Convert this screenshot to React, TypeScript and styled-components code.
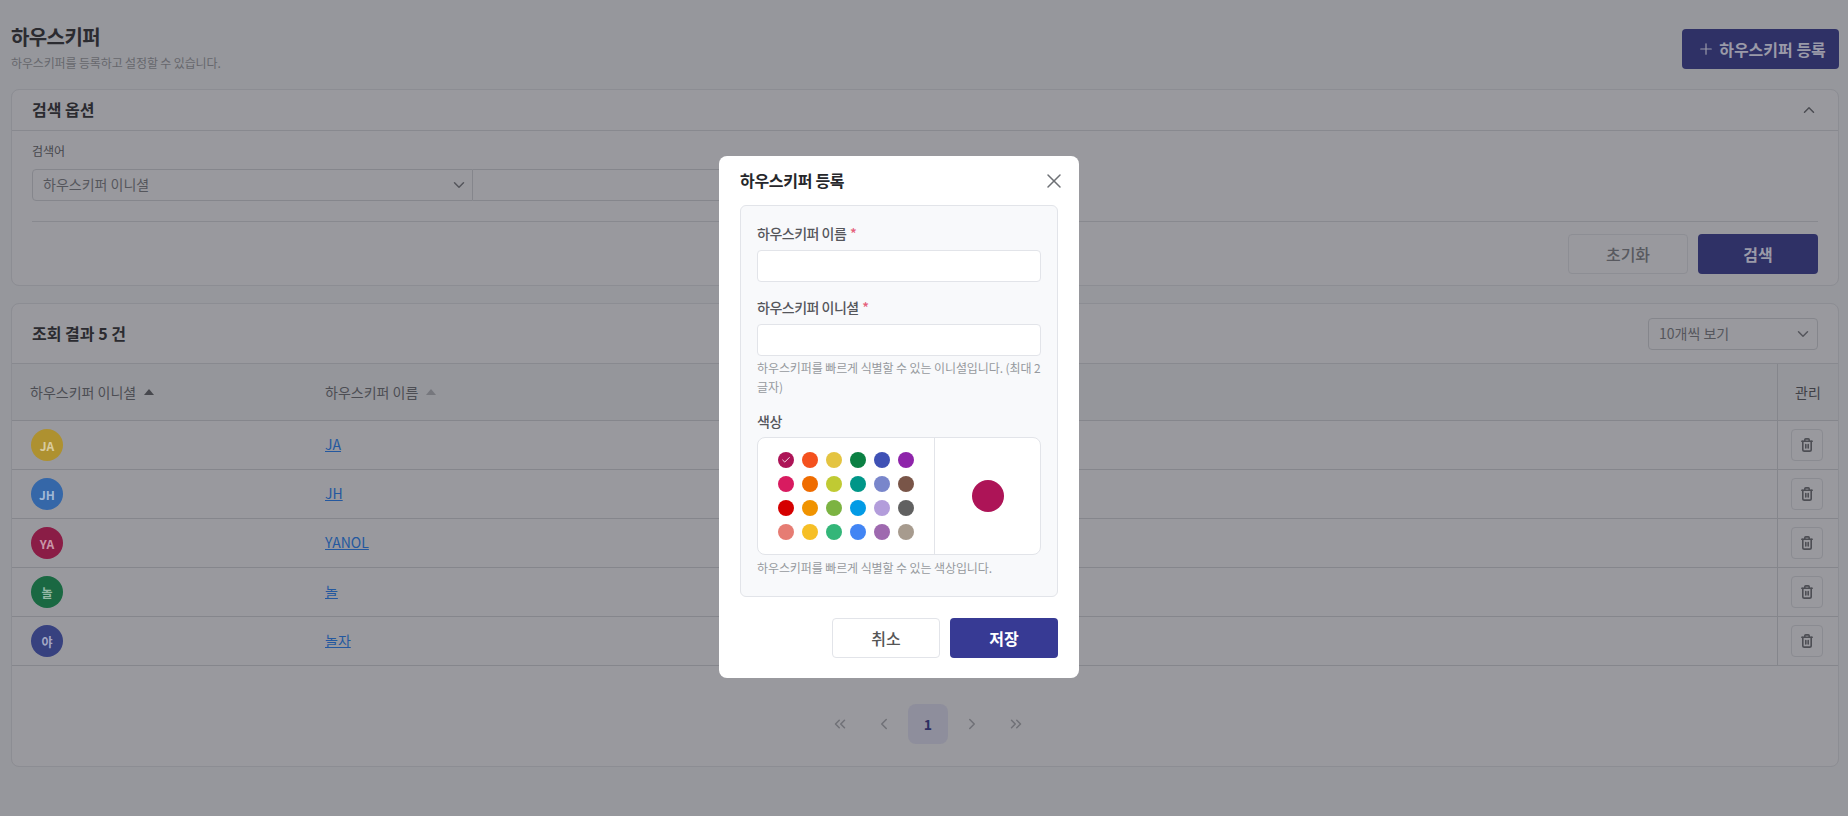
import React from 'react'
import styled, { createGlobalStyle } from 'styled-components';
import { ChevronDown, ChevronUp, ChevronLeft, ChevronRight, ChevronsLeft, ChevronsRight, Plus, X, Check } from 'lucide-react';

const GlobalStyle = createGlobalStyle`
  html, body { margin: 0; padding: 0; height: 100%; }
  body {
    background: #96979c;
    font-family: "Noto Sans CJK KR", "Noto Sans", sans-serif;
    color: #2a2a2e;
    overflow: hidden;
  }
  * { box-sizing: border-box; }
`;

const Page = styled.div`
  width: 1848px;
  height: 816px;
  padding: 0 9px 0 11px;
`;

const PageHeader = styled.header`
  height: 89px;
  display: flex;
  justify-content: space-between;
  align-items: flex-start;
  padding-top: 23px;
`;

const Title = styled.h1`
  margin: 0;
  font-size: 20px;
  line-height: 28px;
  font-weight: 700;
  letter-spacing: -0.6px;
  color: #2b2b30;
`;

const Subtitle = styled.p`
  margin: 3px 0 0;
  font-size: 12px;
  line-height: 18px;
  letter-spacing: -0.14px;
  color: #66676d;
`;

const PrimaryButton = styled.button<{ $width?: number; $dim?: boolean }>`
  width: ${(p) => (p.$width ? p.$width + 'px' : 'auto')};
  height: 40px;
  display: inline-flex;
  align-items: center;
  justify-content: center;
  gap: 4px;
  border: 0;
  border-radius: 4px;
  font-family: inherit;
  font-size: 16px;
  font-weight: 700;
  background: ${(p) => (p.$dim ? '#2f3166' : '#373a94')};
  color: ${(p) => (p.$dim ? '#9a9aa8' : '#fff')};
`;

const RegisterButton = styled(PrimaryButton)`
  margin: 6px 0 0;
  padding: 0 0 0 2px;
`;

const OutlineButton = styled.button<{ $dim?: boolean }>`
  width: ${(p) => (p.$dim ? 120 : 108)}px;
  height: 40px;
  border-radius: 4px;
  font-family: inherit;
  font-size: 16px;
  font-weight: 500;
  border: 1px solid ${(p) => (p.$dim ? '#8d8e94' : '#e2e4e9')};
  background: ${(p) => (p.$dim ? 'transparent' : '#fff')};
  color: ${(p) => (p.$dim ? '#58595f' : '#555')};
`;

const Card = styled.section<{ $height: number }>`
  height: ${(p) => p.$height}px;
  border: 1px solid #8c8d93;
  border-radius: 8px;
  background: #99999e;
  overflow: hidden;
`;

const SearchCard = styled(Card)`
  margin-bottom: 17px;
`;

const CardHeader = styled.div<{ $height: number }>`
  height: ${(p) => p.$height}px;
  display: flex;
  align-items: center;
  justify-content: space-between;
  padding: 0 20px;
  border-bottom: 1px solid #88898f;
`;

const CardTitle = styled.h2`
  margin: 0 0 2px;
  font-size: 16px;
  font-weight: 700;
  color: #2b2b30;
`;

const SearchBody = styled.div`
  padding: 11px 20px 0;
`;

const FieldLabel = styled.div`
  font-size: 12px;
  line-height: 18px;
  color: #46474c;
  margin-bottom: 9px;
`;

const SearchRow = styled.div`
  display: flex;
  padding-bottom: 20px;
  border-bottom: 1px solid #88898f;
`;

const SelectBox = styled.div<{ $width: number; $joined?: boolean }>`
  width: ${(p) => p.$width}px;
  height: 32px;
  display: flex;
  align-items: center;
  justify-content: space-between;
  padding: 0 ${(p) => (p.$joined ? 4 : 5)}px 2px 10px;
  border: 1px solid #85868c;
  border-radius: ${(p) => (p.$joined ? '4px 0 0 4px' : '4px')};
  font-size: 14px;
  color: #55565c;

  svg { margin-top: 2px; }
`;

const SearchInput = styled.div`
  width: 500px;
  height: 32px;
  border: 1px solid #85868c;
  border-left: 0;
`;

const ButtonRow = styled.div`
  display: flex;
  justify-content: flex-end;
  gap: 10px;
  padding-top: 12px;
`;

const TableHead = styled.div`
  height: 57px;
  display: grid;
  grid-template-columns: 295px 1fr 61px;
  align-items: stretch;
  background: #95969b;
  border-bottom: 1px solid #85868c;
`;

const Row = styled.div`
  height: 49px;
  display: grid;
  grid-template-columns: 295px 1fr 61px;
  align-items: stretch;
  border-bottom: 1px solid #85868c;
`;

const HeadCell = styled.div<{ $center?: boolean }>`
  display: flex;
  align-items: center;
  gap: 8px;
  padding-left: ${(p) => (p.$center ? 0 : 18)}px;
  justify-content: ${(p) => (p.$center ? 'center' : 'flex-start')};
  font-size: 14px;
  color: #4c4d53;
`;

const ManageHead = styled(HeadCell)`
  border-left: 1px solid #85868c;
  color: #3f4046;
`;

const SortArrow = styled.span<{ $active?: boolean }>`
  width: 0;
  height: 0;
  border-left: 5px solid transparent;
  border-right: 5px solid transparent;
  border-bottom: 6px solid ${(p) => (p.$active ? '#47484e' : '#76777d')};
`;

const Cell = styled.div`
  display: flex;
  align-items: center;
  padding-left: 19px;
`;

const NameCell = styled(Cell)`
  padding-left: 18px;
`;

const ManageCell = styled(Cell)`
  border-left: 1px solid #85868c;
  padding-left: 13px;
`;

const Avatar = styled.div<{ $color: string }>`
  width: 32px;
  height: 32px;
  border-radius: 50%;
  display: flex;
  align-items: center;
  justify-content: center;
  background: ${(p) => p.$color};
  color: rgba(255, 255, 255, 0.55);
  font-size: 12px;
  font-weight: 700;
`;

const NameLink = styled.a`
  margin-bottom: 2px;
  font-size: 14px;
  color: #24589f;
  text-decoration: underline;
`;

const IconButton = styled.button`
  width: 32px;
  height: 32px;
  padding: 0;
  display: flex;
  align-items: center;
  justify-content: center;
  border: 1px solid #8a8b91;
  border-radius: 4px;
  background: transparent;
  color: #4d4e54;
`;

const Pagination = styled.nav`
  display: flex;
  justify-content: center;
  gap: 4px;
  margin-top: 38px;
  padding-left: 6px;
`;

const PageButton = styled.div<{ $active?: boolean }>`
  width: 40px;
  height: 40px;
  display: flex;
  align-items: center;
  justify-content: center;
  border-radius: 8px;
  font-size: 14px;
  font-weight: 700;
  color: ${(p) => (p.$active ? '#2d2f62' : '#707177')};
  background: ${(p) => (p.$active ? '#8e8e9c' : 'transparent')};
`;

const ModalLayer = styled.div`
  position: fixed;
  inset: 0;
  padding: 156px 0 0 719px;
`;

const Modal = styled.div`
  width: 360px;
  height: 522px;
  padding: 0 21px;
  background: #fff;
  border-radius: 8px;
`;

const ModalHeader = styled.div`
  height: 49px;
  display: flex;
  align-items: center;
  justify-content: space-between;
  color: #6d7075;
`;

const ModalTitle = styled.h3`
  margin: 0 0 2px;
  font-size: 16px;
  font-weight: 700;
  letter-spacing: -0.3px;
  color: #26272b;
`;

const CloseIcon = styled(X)`
  margin: 1px -8px 0 0;
`;

const FormPanel = styled.div`
  height: 392px;
  padding: 17px 16px 0;
  background: #f8f9fb;
  border: 1px solid #e2e4e9;
  border-radius: 6px;
`;

const FormLabel = styled.label`
  display: block;
  font-size: 14px;
  font-weight: 500;
  line-height: 20px;
  letter-spacing: -0.5px;
  color: #55565b;
  margin-bottom: 7px;
`;

const ColorLabel = styled(FormLabel)`
  margin-bottom: 6px;
`;

const Required = styled.span`
  margin-left: 1px;
  color: #e5607a;
`;

const TextInput = styled.input`
  display: block;
  width: 100%;
  height: 32px;
  border: 1px solid #e2e4e9;
  border-radius: 4px;
  background: #fff;
`;

const FieldGroup = styled.div`
  margin-bottom: 15px;
`;

const HelpText = styled.p`
  margin: 2px 0 0;
  font-size: 12px;
  line-height: 19px;
  letter-spacing: -0.1px;
  color: #96999e;
`;

const PickerHelp = styled(HelpText)`
  margin-top: 3px;
`;

const PickerBox = styled.div`
  height: 118px;
  display: grid;
  grid-template-columns: 177px 1fr;
  background: #fff;
  border: 1px solid #e2e4e9;
  border-radius: 8px;
`;

const SwatchGrid = styled.div`
  display: grid;
  grid-template-columns: repeat(6, 16px);
  grid-auto-rows: 16px;
  gap: 8px;
  padding: 14px 0 0 20px;
  border-right: 1px solid #e2e4e9;
`;

const Swatch = styled.div<{ $color: string }>`
  width: 16px;
  height: 16px;
  border-radius: 50%;
  display: flex;
  align-items: center;
  justify-content: center;
  background: ${(p) => p.$color};
  color: #fff;
`;

const PreviewWrap = styled.div`
  display: flex;
  align-items: center;
  justify-content: center;
`;

const PreviewDot = styled.div`
  width: 32px;
  height: 32px;
  border-radius: 50%;
  background: #ad1457;
`;

const ModalFooter = styled.div`
  display: flex;
  justify-content: flex-end;
  gap: 10px;
  padding-top: 21px;
`;

const swatches = [
  '#ad1457', '#f4511e', '#e4c441', '#0b8043', '#3f51b5', '#8e24aa',
  '#d81b60', '#ef6c00', '#c0ca33', '#009688', '#7986cb', '#795548',
  '#d50000', '#f09300', '#7cb342', '#039be5', '#b39ddb', '#616161',
  '#e67c73', '#f6bf26', '#33b679', '#4285f4', '#9e69af', '#a79b8e',
];

const rows = [
  { initial: 'JA', name: 'JA', color: '#ae9130' },
  { initial: 'JH', name: 'JH', color: '#3567a8' },
  { initial: 'YA', name: 'YANOL', color: '#8a1d46' },
  { initial: '놀', name: '놀', color: '#1a6842' },
  { initial: '야', name: '놀자', color: '#37417f' },
];

function TrashIcon() {
  return (
    <svg width="16" height="16" viewBox="0 0 16 16" fill="none" stroke="currentColor" strokeWidth="1.6" strokeLinecap="round" strokeLinejoin="round">
      <path d="M2.8 4.2h10.4" />
      <path d="M5.8 4.2V2.8c0-.5.4-.9.9-.9h2.6c.5 0 .9.4.9.9v1.4" />
      <path d="M3.8 4.2v8.2c0 1 .7 1.7 1.7 1.7h5c1 0 1.7-.7 1.7-1.7V4.2" />
      <path d="M6.8 7.5v3.4M9.2 7.5v3.4" />
    </svg>
  );
}

export default function App() {
  return (
    <>
      <GlobalStyle />
      <Page>
        <PageHeader>
          <div>
            <Title>하우스키퍼</Title>
            <Subtitle>하우스키퍼를 등록하고 설정할 수 있습니다.</Subtitle>
          </div>
          <RegisterButton $width={157} $dim>
            <Plus size={18} strokeWidth={1.6} />
            하우스키퍼 등록
          </RegisterButton>
        </PageHeader>

        <SearchCard $height={197}>
          <CardHeader $height={41}>
            <CardTitle>검색 옵션</CardTitle>
            <ChevronUp size={18} color="#4c4d53" />
          </CardHeader>
          <SearchBody>
            <FieldLabel>검색어</FieldLabel>
            <SearchRow>
              <SelectBox $width={441} $joined>
                하우스키퍼 이니셜
                <ChevronDown size={18} color="#55565c" />
              </SelectBox>
              <SearchInput />
            </SearchRow>
            <ButtonRow>
              <OutlineButton $dim>초기화</OutlineButton>
              <PrimaryButton $width={120} $dim>검색</PrimaryButton>
            </ButtonRow>
          </SearchBody>
        </SearchCard>

        <Card $height={464}>
          <CardHeader $height={60}>
            <CardTitle>조회 결과 5 건</CardTitle>
            <SelectBox $width={170}>
              10개씩 보기
              <ChevronDown size={18} color="#55565c" />
            </SelectBox>
          </CardHeader>
          <TableHead>
            <HeadCell>하우스키퍼 이니셜 <SortArrow $active /></HeadCell>
            <HeadCell>하우스키퍼 이름 <SortArrow /></HeadCell>
            <ManageHead $center>관리</ManageHead>
          </TableHead>
          {rows.map((row) => (
            <Row key={row.name}>
              <Cell><Avatar $color={row.color}>{row.initial}</Avatar></Cell>
              <NameCell><NameLink>{row.name}</NameLink></NameCell>
              <ManageCell><IconButton><TrashIcon /></IconButton></ManageCell>
            </Row>
          ))}
          <Pagination>
            <PageButton><ChevronsLeft size={18} /></PageButton>
            <PageButton><ChevronLeft size={18} /></PageButton>
            <PageButton $active>1</PageButton>
            <PageButton><ChevronRight size={18} /></PageButton>
            <PageButton><ChevronsRight size={18} /></PageButton>
          </Pagination>
        </Card>
      </Page>

      <ModalLayer>
        <Modal>
          <ModalHeader>
            <ModalTitle>하우스키퍼 등록</ModalTitle>
            <CloseIcon size={24} strokeWidth={1.5} />
          </ModalHeader>
          <FormPanel>
            <FieldGroup>
              <FormLabel>하우스키퍼 이름 <Required>*</Required></FormLabel>
              <TextInput />
            </FieldGroup>
            <FieldGroup>
              <FormLabel>하우스키퍼 이니셜 <Required>*</Required></FormLabel>
              <TextInput />
              <HelpText>하우스키퍼를 빠르게 식별할 수 있는 이니셜입니다. (최대 2 글자)</HelpText>
            </FieldGroup>
            <div>
              <ColorLabel>색상</ColorLabel>
              <PickerBox>
                <SwatchGrid>
                  {swatches.map((color, i) => (
                    <Swatch key={color} $color={color}>
                      {i === 0 && <Check size={10} strokeWidth={2} />}
                    </Swatch>
                  ))}
                </SwatchGrid>
                <PreviewWrap><PreviewDot /></PreviewWrap>
              </PickerBox>
              <PickerHelp>하우스키퍼를 빠르게 식별할 수 있는 색상입니다.</PickerHelp>
            </div>
          </FormPanel>
          <ModalFooter>
            <OutlineButton>취소</OutlineButton>
            <PrimaryButton $width={108}>저장</PrimaryButton>
          </ModalFooter>
        </Modal>
      </ModalLayer>
    </>
  )
}
